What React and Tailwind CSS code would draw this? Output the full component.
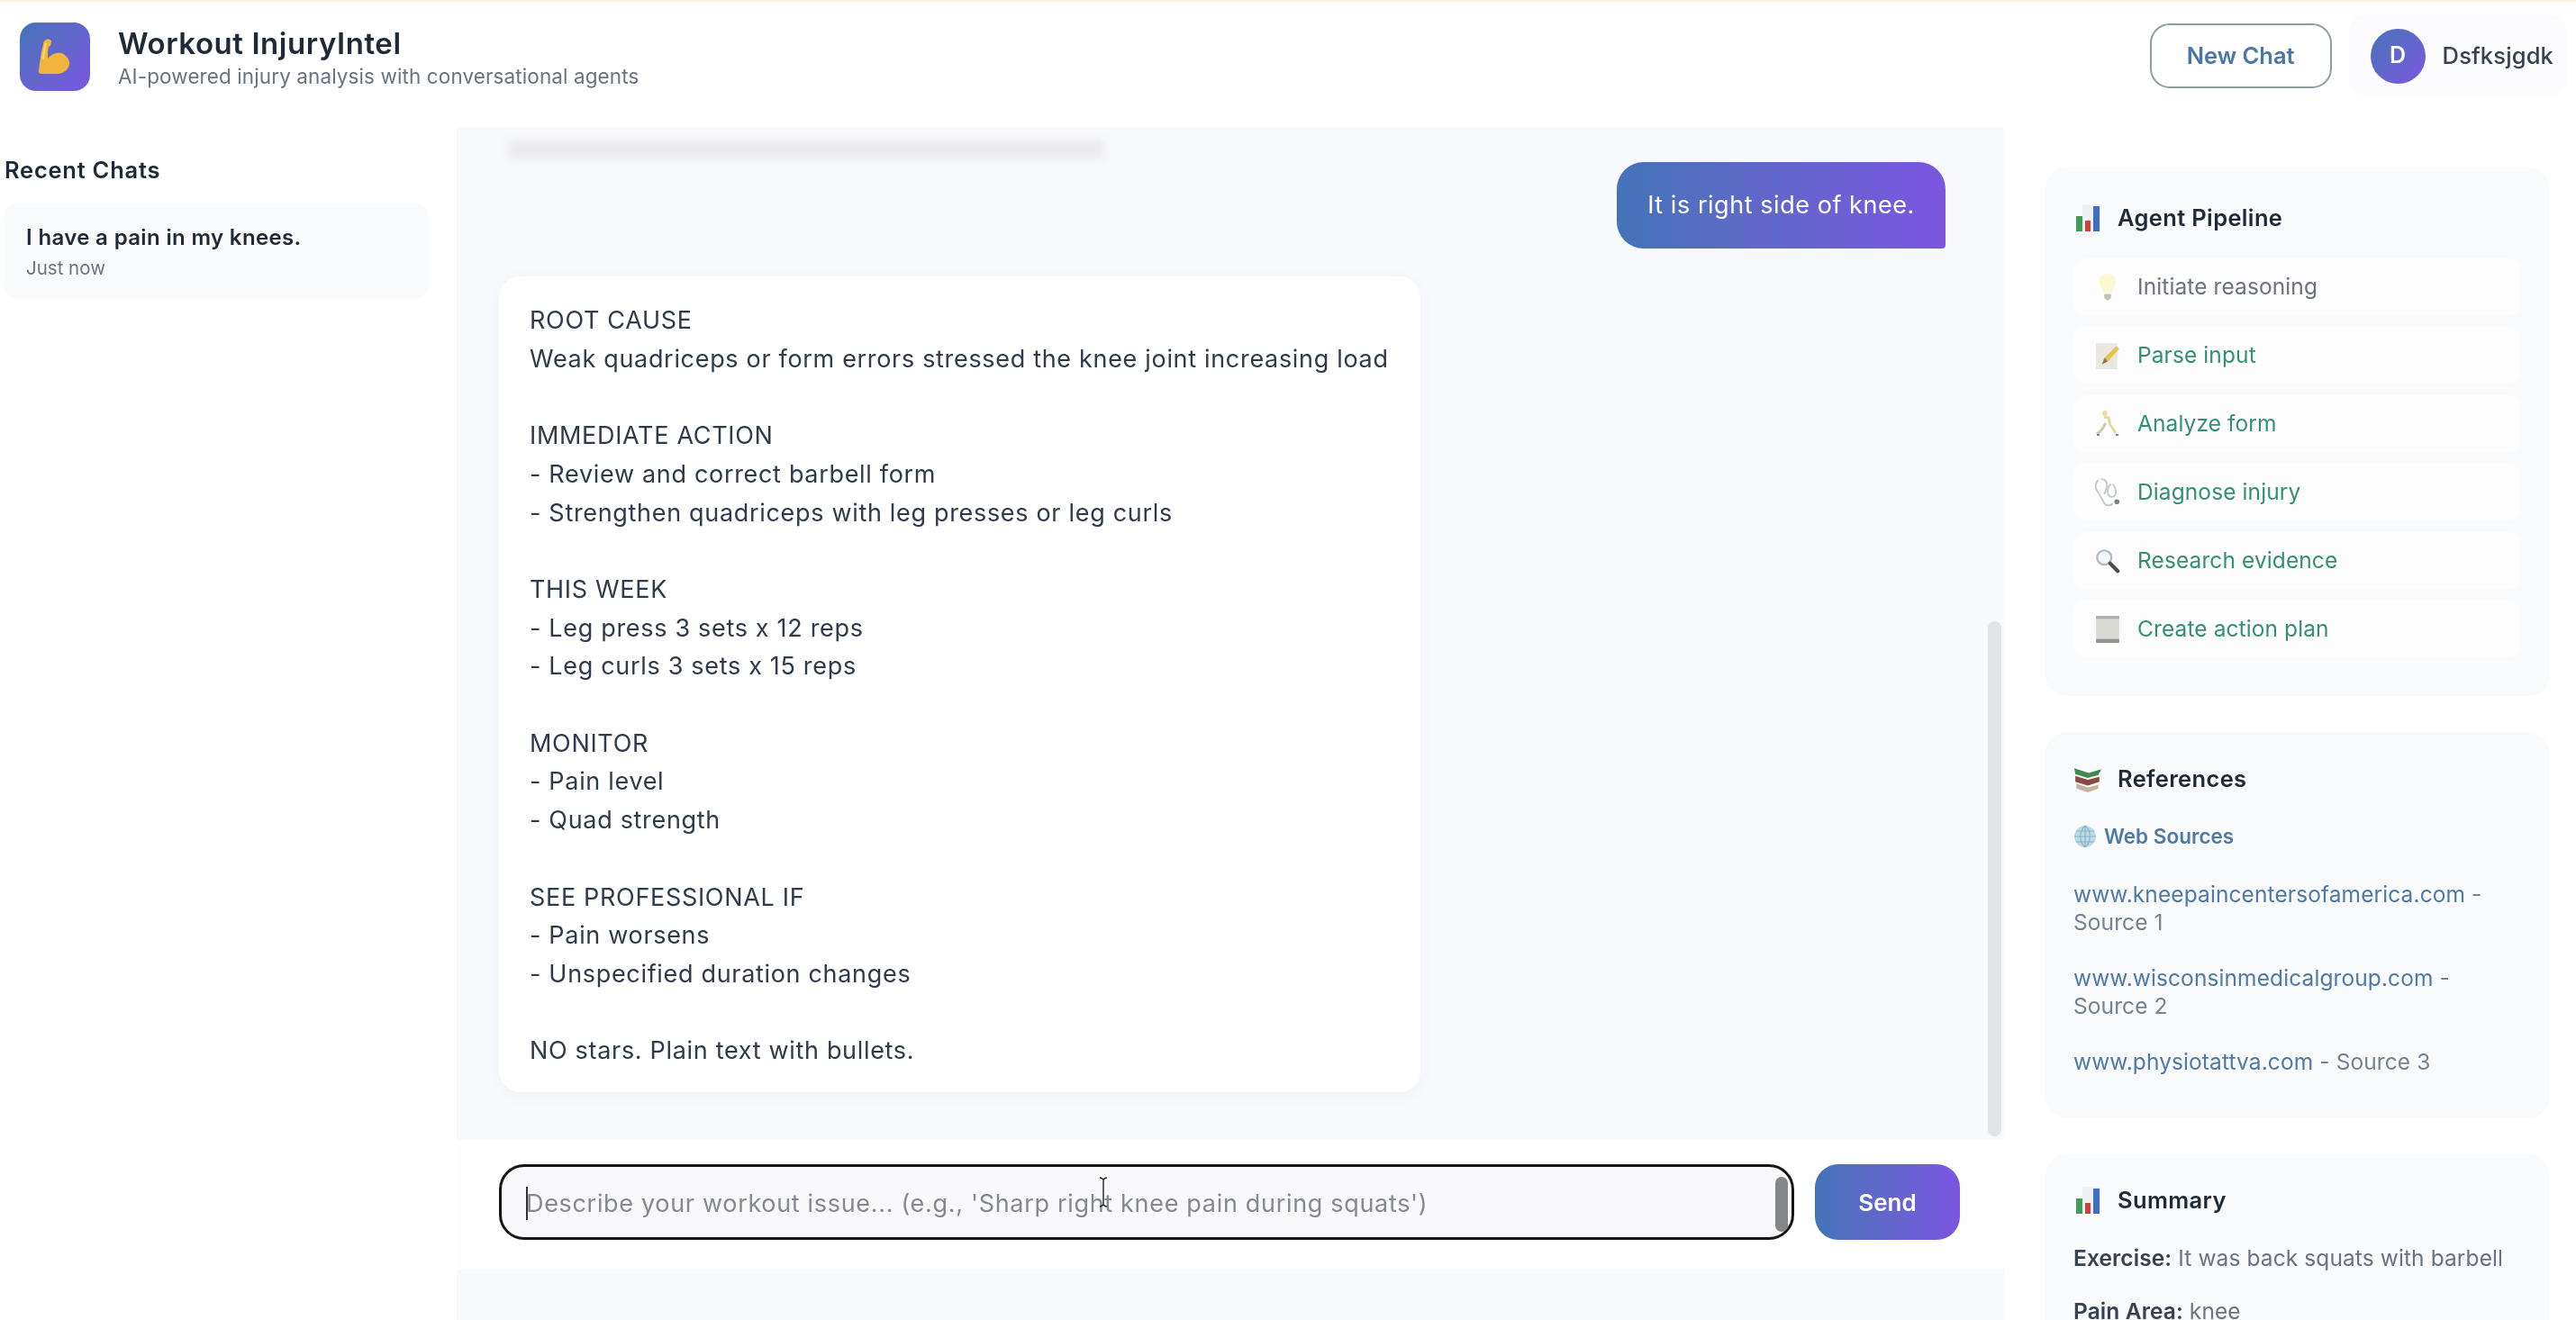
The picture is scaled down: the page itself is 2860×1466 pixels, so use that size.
import React from "react";

const font = { fontFamily: "Inter, 'Noto Sans', sans-serif" };

function Muscle({ className }) {
  return (
    <svg viewBox="0 0 36 40" className={className}>
      <path d="M8 1c3-1 6 0 6 2l-1 5-2 1c-1 4-1 8-1 13 3-4 9-7 15-6 5 2 9 6 9 11 0 7-6 11-12 12H3c-2 0-3-1-3-3C1 26 3 14 5 6c0-2 1-4 3-5z" fill="#f2b53c" />
      <path d="M8 5c-1 5-3 12-3 18" stroke="#fbd873" strokeWidth="2" fill="none" />
    </svg>
  );
}
function Bars({ className }) {
  return (
    <svg viewBox="0 0 28 30" className={className}>
      <rect x="8" y="0" width="20" height="30" fill="#eef0f3" />
      <rect x="1" y="13" width="7" height="17" fill="#3f9e55" />
      <rect x="11" y="18" width="6" height="12" fill="#d2403a" />
      <rect x="20" y="2" width="7" height="28" fill="#3c6fc0" />
    </svg>
  );
}
function Bulb({ className }) {
  return (
    <svg viewBox="0 0 24 34" className={className}>
      <path d="M12 1c6 0 10 4 10 10 0 5-4 8-5 13H7C6 19 2 16 2 11 2 5 6 1 12 1z" fill="#fbf8d4" />
      <path d="M8 25h8v5l-4 3-4-3z" fill="#c2c2b8" />
    </svg>
  );
}
function Memo({ className }) {
  return (
    <svg viewBox="0 0 26 30" className={className}>
      <rect x="1" y="2" width="22" height="27" fill="#e9e7e2" />
      <path d="M7 24l3-7L22 5l3 3-12 13z" fill="#e9c24e" />
      <path d="M7 24l3-7 3 4z" fill="#8f7a45" />
    </svg>
  );
}
function Runner({ className }) {
  return (
    <svg viewBox="0 0 28 30" className={className}>
      <circle cx="11" cy="3" r="3" fill="#ecdf9d" />
      <path d="M10 7l5 1 2 8 6 9" stroke="#dedaa0" strokeWidth="3" fill="none" />
      <path d="M12 14L7 22l-5 4" stroke="#c8cdb2" strokeWidth="3" fill="none" />
      <path d="M2 27h3M23 27h3" stroke="#7d8478" strokeWidth="2" />
    </svg>
  );
}
function Stethoscope({ className }) {
  return (
    <svg viewBox="0 0 30 34" className={className} fill="none">
      <path d="M4 2C0 6 0 11 3 16c3 5 6 9 8 14 2 3 8 3 10 0" stroke="#c6c9cb" strokeWidth="2" />
      <path d="M7 1c6 0 8 4 7 9-1 4-2 7-3 9M19 7c-4 2-5 9-3 13 2 3 6 3 8 0 2-4 0-10-3-13" stroke="#c6c9cb" strokeWidth="2" />
      <circle cx="26" cy="28" r="3" fill="#7b8186" />
    </svg>
  );
}
function Magnifier({ className }) {
  return (
    <svg viewBox="0 0 30 30" className={className} fill="none">
      <circle cx="11" cy="11" r="8.5" fill="#f3f6f8" stroke="#b6babd" strokeWidth="2.5" />
      <path d="M18 18l9 9" stroke="#4b4f54" strokeWidth="4.5" strokeLinecap="round" />
    </svg>
  );
}
function Ledger({ className }) {
  return (
    <svg viewBox="0 0 26 30" className={className}>
      <rect x="1" y="1" width="24" height="28" fill="#d9dad3" />
      <rect x="1" y="1" width="24" height="3" fill="#aeb0aa" />
      <rect x="1" y="25" width="24" height="4" fill="#8f918b" />
    </svg>
  );
}
function Books({ className }) {
  return (
    <svg viewBox="0 0 30 28" className={className}>
      <path d="M1 3l15 5 13-4-3 6-11 3L2 9z" fill="#3f8a52" />
      <path d="M2 11l13 4 12-3v5l-12 4-13-4z" fill="#8a4a42" />
      <path d="M3 19l12 4 11-3v4l-11 4-12-4z" fill="#c4b49f" />
    </svg>
  );
}
function Globe({ className }) {
  return (
    <svg viewBox="0 0 26 26" className={className} fill="none">
      <circle cx="13" cy="13" r="12" fill="#bcdbe6" />
      <path d="M1 13h24M13 1v24M3 7h20M3 19h20M13 1c-7 6-7 18 0 24M13 1c7 6 7 18 0 24" stroke="#8bb3c6" strokeWidth="1.2" />
    </svg>
  );
}

const steps = [
  [Bulb, "Initiate reasoning", "text-[#6b7280]"],
  [Memo, "Parse input", "text-[#358f75]"],
  [Runner, "Analyze form", "text-[#358f75]"],
  [Stethoscope, "Diagnose injury", "text-[#358f75]"],
  [Magnifier, "Research evidence", "text-[#358f75]"],
  [Ledger, "Create action plan", "text-[#358f75]"],
];

const answer = `ROOT CAUSE
Weak quadriceps or form errors stressed the knee joint increasing load

IMMEDIATE ACTION
- Review and correct barbell form
- Strengthen quadriceps with leg presses or leg curls

THIS WEEK
- Leg press 3 sets x 12 reps
- Leg curls 3 sets x 15 reps

MONITOR
- Pain level
- Quad strength

SEE PROFESSIONAL IF
- Pain worsens
- Unspecified duration changes

NO stars. Plain text with bullets.`;

function Source({ url, tail }) {
  return (
    <p className="text-[24.5px] leading-[31px] tracking-[0.1px] text-[#748292]">
      <span className="text-[#4f7aa8]">{url}</span> {tail}
    </p>
  );
}

function CardTitle({ Icon, children }) {
  return (
    <div className="flex items-center gap-[17px]">
      <Icon className="w-[32px] h-[30px] shrink-0" />
      <h3 className="text-[25.5px] leading-[32px] tracking-[0.35px] font-semibold text-[#1f2937]">{children}</h3>
    </div>
  );
}

export default function App() {
  return (
    <div style={font} className="h-screen w-full overflow-hidden bg-white flex flex-col border-t-2 border-[#fff3de] blur-[0.6px]">
      <header className="h-[140px] shrink-0 flex items-start justify-between pl-[22px] pr-[10px]">
        <div className="flex items-start gap-[31px] pt-[23px]">
          <div className="w-[78px] h-[76px] rounded-[18px] bg-linear-to-br from-[#4373b8] to-[#7b55e0] flex items-center justify-center">
            <Muscle className="w-[36px] h-[40px]" />
          </div>
          <div className="pt-[3px]">
            <h1 className="text-[33px] leading-[40px] tracking-[0.55px] font-semibold text-[#1f2937]">Workout InjuryIntel</h1>
            <p className="text-[22.5px] leading-[30px] tracking-[0.1px] text-[#6b7280] mt-[2px]">AI-powered injury analysis with conversational agents</p>
          </div>
        </div>
        <div className="flex items-start pt-[24px] gap-[18px]">
          <button className="w-[202px] h-[72px] rounded-[22px] border-2 border-[#8f9da3] bg-white text-[25.5px] font-semibold text-[#4a76a8]">New Chat</button>
          <div className="h-[92px] -mt-[10px] pl-[25px] pr-[15px] rounded-[20px] bg-[#fcfcfe] flex items-center gap-[19px]">
            <div className="w-[61px] h-[61px] rounded-full bg-linear-to-br from-[#4373b8] to-[#7b55e0] flex items-center justify-center text-white font-semibold text-[25px]">D</div>
            <span className="text-[25.5px] tracking-[0.15px] font-medium text-[#374151]">Dsfksjgdk</span>
          </div>
        </div>
      </header>

      <div className="flex-1 min-h-0 flex">
        <aside className="w-[507px] shrink-0 pl-[4px] pr-[31px] pt-[31px]">
          <h2 className="pl-px text-[25.5px] leading-[32px] tracking-[0.75px] font-semibold text-[#1f2937]">Recent Chats</h2>
          <div className="mt-[21px] h-[106px] rounded-[14px] bg-[#f9fafc] pl-[25px] pt-[22px]">
            <p className="text-[24px] leading-[32px] tracking-[0.35px] font-semibold text-[#1f2937]">I have a pain in my knees.</p>
            <p className="text-[20.5px] leading-[28px] mt-[4px] text-[#6b7280]">Just now</p>
          </div>
        </aside>

        <main className="w-[1718px] shrink-0 bg-[#f8f9fc] flex flex-col">
          <div className="relative h-[1124px] shrink-0 overflow-hidden pl-[47px] pr-[65px]">
            <div className="absolute right-[3px] top-[548px] bottom-[4px] w-[15px] rounded-full bg-[#e2e3e6]" />
            <div className="mt-[13px] ml-[11px] w-[660px] h-[22px] bg-[#ebebee] blur-[5px]" />
            <div className="flex justify-end mt-[3px]">
              <div className="h-[96px] w-[365px] rounded-[30px] rounded-br-[4px] bg-linear-to-r from-[#4373b8] to-[#7b55e0] flex items-center justify-center text-white text-[27px] tracking-[0.55px]">
                It is right side of knee.
              </div>
            </div>
            <div className="mt-[31px] w-[1023px] h-[906px] rounded-[24px] bg-white shadow-[0_4px_20px_rgba(0,0,0,0.03)] pl-[34px] pt-[28px] text-[27px] leading-[42.7px] tracking-[0.68px] text-[#2f3a4a] whitespace-pre-line">
              {answer}
            </div>
          </div>

          <div className="h-[144px] shrink-0 bg-[#fefefe] pl-[47px] pt-[27px] flex gap-[23px] items-start">
            <div className="relative w-[1438px] h-[84px]">
              <input
                readOnly
                placeholder="Describe your workout issue... (e.g., 'Sharp right knee pain during squats')"
                className="w-full h-full rounded-[28px] border-[3px] border-[#161616] bg-[#f9f9fb] pl-[27px] pr-[40px] pt-[3px] text-[27px] tracking-[0.68px] text-[#374151] outline-none placeholder:text-[#85898f]"
                style={font}
              />
              <div className="absolute left-[30px] top-[25px] w-[2px] h-[37px] bg-[#333333]" />
              <div className="absolute right-[7px] top-[14px] w-[14px] h-[61px] rounded-full bg-[#85868a]" />
              <svg viewBox="0 0 12 34" className="absolute left-[665px] top-[14px] w-[12px] h-[34px]" fill="none">
                <path d="M2 1c2 0 3 1 4 2 1-1 2-2 4-2M6 3v28M2 33c2 0 3-1 4-2 1 1 2 2 4 2" stroke="#222" strokeWidth="1.4" />
              </svg>
            </div>
            <button className="w-[161px] h-[84px] rounded-[26px] bg-linear-to-r from-[#4373b8] to-[#7b55e0] text-white font-semibold text-[26px]">Send</button>
          </div>
          <div className="flex-1" />
        </main>

        <aside className="flex-1 min-w-0 overflow-hidden pl-[46px] pr-[29px] pt-[44px] flex flex-col gap-[40px]">
          <section className="shrink-0 h-[587px] rounded-[24px] bg-[#f9fafc] pl-[31px] pr-[33px] pt-[40px]">
            <CardTitle Icon={Bars}>Agent Pipeline</CardTitle>
            <div className="mt-[29px] flex flex-col gap-[13px]">
              {steps.map(([Icon, label, color]) => (
                <div key={label} className="h-[63px] rounded-[14px] bg-[#fdfdfe] flex items-center pl-[24px] gap-[19px]">
                  <Icon className="w-[28px] h-[32px] shrink-0" />
                  <span className={`text-[24.5px] tracking-[0.1px] ${color}`}>{label}</span>
                </div>
              ))}
            </div>
          </section>

          <section className="shrink-0 h-[429px] rounded-[24px] bg-[#f9fafc] pl-[31px] pr-[33px] pt-[36px]">
            <CardTitle Icon={Books}>References</CardTitle>
            <div className="mt-[33px] flex items-center gap-[8px]">
              <Globe className="w-[26px] h-[26px] shrink-0" />
              <span className="text-[22.5px] leading-[30px] font-semibold text-[#4f7aa8]">Web Sources</span>
            </div>
            <div className="mt-[34px] flex flex-col gap-[31px]">
              <Source url="www.kneepaincentersofamerica.com" tail="- Source 1" />
              <Source url="www.wisconsinmedicalgroup.com" tail="- Source 2" />
              <Source url="www.physiotattva.com" tail="- Source 3" />
            </div>
          </section>

          <section className="shrink-0 h-[300px] rounded-[24px] bg-[#f9fafc] pl-[31px] pr-[33px] pt-[35px]">
            <CardTitle Icon={Bars}>Summary</CardTitle>
            <p className="mt-[32px] text-[24.5px] leading-[32px] tracking-[0.1px] text-[#6b7280]"><strong className="font-semibold text-[#374151]">Exercise:</strong> It was back squats with barbell</p>
            <p className="mt-[27px] text-[24.5px] leading-[32px] tracking-[0.1px] text-[#6b7280]"><strong className="font-semibold text-[#374151]">Pain Area:</strong> knee</p>
          </section>
        </aside>
      </div>
    </div>
  );
}
